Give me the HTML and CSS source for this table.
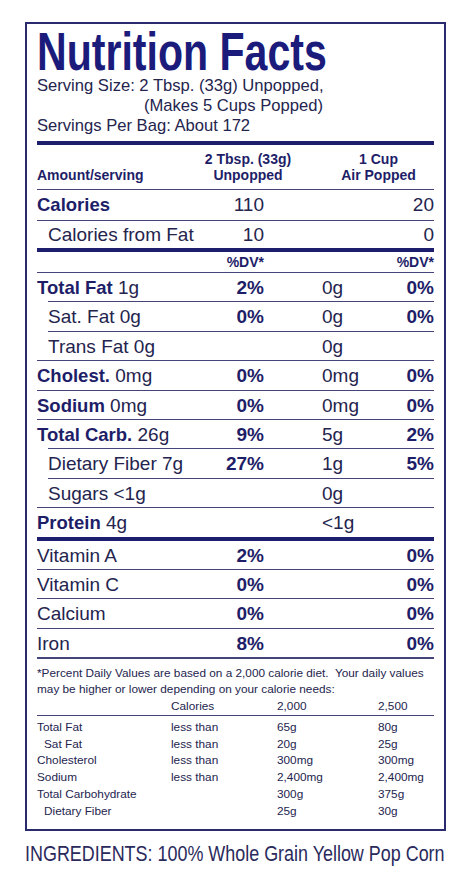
FILE: index.html
```html
<!DOCTYPE html>
<html lang="en">
<head>
    <meta charset="UTF-8">
    <meta name="viewport" content="width=device-width, initial-scale=1.0">
    <title>Nutrition Facts</title>
    <link rel="stylesheet" href="styles.css">
</head>
<body>
    <!-- Nutrition label -->
    <div class="label">
        <h1 class="title"><span class="squeeze">Nutrition Facts</span></h1>
        <div class="serving">
            <p>Serving Size: 2 Tbsp. (33g) Unpopped,</p>
            <p class="indent">(Makes 5 Cups Popped)</p>
            <p>Servings Per Bag: About 172</p>
        </div>

        <div class="cols-head">
            <span class="amount">Amount/serving</span>
            <span class="center">2 Tbsp. (33g)<br>Unpopped</span>
            <span></span>
            <span class="center">1 Cup<br>Air Popped</span>
        </div>

        <div class="row cal">
            <span><b>Calories</b></span>
            <span class="r">110</span>
            <span></span>
            <span class="r">20</span>
        </div>
        <div class="row cal-fat">
            <span class="pad">Calories from Fat</span>
            <span class="r">10</span>
            <span></span>
            <span class="r">0</span>
        </div>
        <div class="row dv">
            <span></span>
            <span class="r">%DV*</span>
            <span></span>
            <span class="r">%DV*</span>
        </div>

        <div class="row"><span><b>Total Fat</b> 1g</span><b class="r">2%</b><span class="amt">0g</span><b class="r">0%</b></div>
        <div class="row sub"><span>Sat. Fat 0g</span><b class="r">0%</b><span class="amt">0g</span><b class="r">0%</b></div>
        <div class="row sub"><span>Trans Fat 0g</span><span></span><span class="amt">0g</span><span></span></div>
        <div class="row"><span><b>Cholest.</b> 0mg</span><b class="r">0%</b><span class="amt">0mg</span><b class="r">0%</b></div>
        <div class="row"><span><b>Sodium</b> 0mg</span><b class="r">0%</b><span class="amt">0mg</span><b class="r">0%</b></div>
        <div class="row"><span><b>Total Carb.</b> 26g</span><b class="r">9%</b><span class="amt">5g</span><b class="r">2%</b></div>
        <div class="row sub"><span>Dietary Fiber 7g</span><b class="r">27%</b><span class="amt">1g</span><b class="r">5%</b></div>
        <div class="row sub"><span>Sugars &lt;1g</span><span></span><span class="amt">0g</span><span></span></div>
        <div class="row"><span><b>Protein</b> 4g</span><span></span><span class="amt">&lt;1g</span><span></span></div>

        <div class="row vit first"><span>Vitamin A</span><b class="r">2%</b><span></span><b class="r">0%</b></div>
        <div class="row vit"><span>Vitamin C</span><b class="r">0%</b><span></span><b class="r">0%</b></div>
        <div class="row vit"><span>Calcium</span><b class="r">0%</b><span></span><b class="r">0%</b></div>
        <div class="row vit last"><span>Iron</span><b class="r">8%</b><span></span><b class="r">0%</b></div>

        <p class="note">*Percent Daily Values are based on a 2,000 calorie diet.&nbsp; Your daily values<br>may be higher or lower depending on your calorie needs:</p>

        <div class="dv-table">
            <div class="dv-head">
                <span></span><span>Calories</span><span>2,000</span><span>2,500</span>
            </div>
            <div class="dv-body">
                <span>Total Fat</span><span>less than</span><span>65g</span><span>80g</span>
                <span class="in">Sat Fat</span><span>less than</span><span>20g</span><span>25g</span>
                <span>Cholesterol</span><span>less than</span><span>300mg</span><span>300mg</span>
                <span>Sodium</span><span>less than</span><span>2,400mg</span><span>2,400mg</span>
                <span>Total Carbohydrate</span><span></span><span>300g</span><span>375g</span>
                <span class="in">Dietary Fiber</span><span></span><span>25g</span><span>30g</span>
            </div>
        </div>
    </div>

    <p class="ingredients"><span class="squeeze">INGREDIENTS: 100% Whole Grain Yellow Pop Corn</span></p>
</body>
</html>
```

FILE: styles.css
```css
* {
    margin: 0;
    padding: 0;
    box-sizing: border-box;
}

body {
    background: #ffffff;
    font-family: 'Liberation Sans', Arial, sans-serif;
    color: #24244e;
    overflow-x: hidden;
}

b {
    font-weight: bold;
    color: #1e1e68;
}

/* condensed look for the big type */
.squeeze {
    display: inline-block;
    white-space: nowrap;
    transform-origin: left center;
}

.label {
    width: 421px;
    margin: 22px 0 0 25px;
    border: 2px solid #2a2a6e;
    padding: 0 10px 9px 10px;
}

.title {
    font-size: 53px;
    line-height: 48px;
    padding-top: 4px;
    font-weight: bold;
    color: #1b1b7c;
    white-space: nowrap;
}

.title .squeeze {
    transform: scaleX(0.775);
}

.serving p {
    font-size: 16.6px;
    line-height: 20px;
}

.serving .indent {
    padding-left: 107px;
}

/* column headings */
.cols-head {
    display: grid;
    grid-template-columns: 1fr 110px 20px 111px;
    align-items: end;
    margin-top: 5px;
    border-top: 4px solid #1e1e6e;
    padding: 6px 0 6px;
    font-size: 14px;
    line-height: 16px;
    font-weight: bold;
    color: #1e1e68;
}

.cols-head .center {
    text-align: center;
}

/* nutrient rows */
.row {
    display: grid;
    grid-template-columns: 1fr 68px 115px 55px;
    border-top: 1px solid #44447a;
    font-size: 19px;
    line-height: 27.4px;
    padding-top: 1px;
    white-space: nowrap;
}

.row b {
    font-size: 19px;
}

.row span b {
    font-size: 18.5px;
}

.row .r {
    text-align: right;
}

.row .amt {
    padding-left: 58px;
}

.row.sub {
    margin-left: 11px;
}

.row .pad {
    padding-left: 11px;
}

.row.cal {
    line-height: 30px;
    padding-top: 0;
}

.row.cal-fat {
    line-height: 27px;
    padding-top: 0;
}

.row.dv {
    border-top: 4px solid #1e1e6e;
    font-size: 14px;
    font-weight: bold;
    color: #1e1e68;
    line-height: 19px;
    padding-top: 1px;
}

.row.vit {
    line-height: 27.3px;
}

.row.vit.first {
    border-top: 4px solid #1e1e6e;
}

.row.vit.last {
    border-bottom: 2px solid #44447a;
}

/* footnote */
.note {
    padding-top: 6px;
    font-size: 11.8px;
    line-height: 16px;
    white-space: nowrap;
}

.dv-table {
    font-size: 11.8px;
}

.dv-head,
.dv-body {
    display: grid;
    grid-template-columns: 134px 106px 101px 1fr;
}

.dv-head {
    line-height: 16px;
    padding: 1.5px 0 1px;
    border-bottom: 1px solid #44447a;
}

.dv-body {
    line-height: 16.8px;
    padding-top: 2.5px;
}

.dv-body .in {
    padding-left: 7px;
}

.ingredients {
    width: 430px;
    overflow: hidden;
    margin: 10px 0 0 25px;
    font-size: 22px;
    line-height: 26px;
    color: #2a2a5c;
    white-space: nowrap;
}

.ingredients .squeeze {
    transform: scaleX(0.815);
}
```
